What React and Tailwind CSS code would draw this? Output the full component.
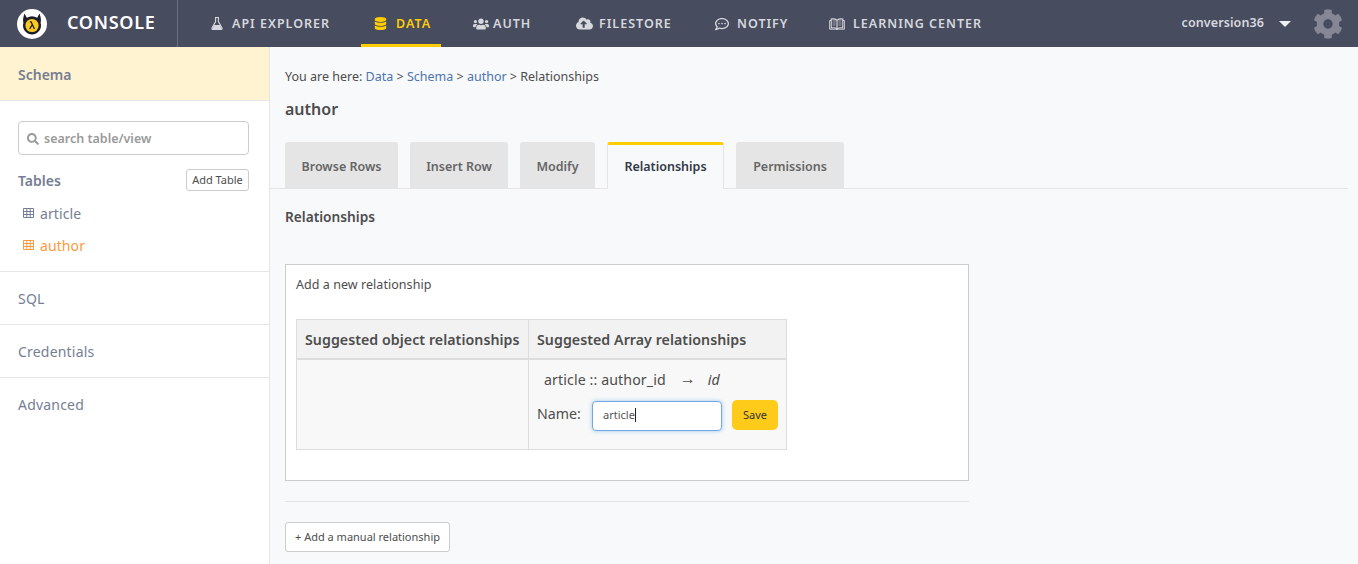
import React from "react";
import { FaDatabase, FaUsers, FaCloudUploadAlt, FaRegCommentDots, FaSearch, FaCog } from "react-icons/fa";

function FlaskIcon({ className }) {
  return (
    <svg viewBox="0 0 12 13" width="12" height="13" className={className}>
      <path d="M4 0.5 H8 M4.6 0.5 V4.6 L1 11 Q0.6 12.5 2 12.5 H10 Q11.4 12.5 11 11 L7.4 4.6 V0.5" fill="none" stroke="currentColor" strokeWidth="1.1" />
      <path d="M3.2 8 H8.8 L10.6 11.4 Q10.8 12.3 10 12.3 H2 Q1.2 12.3 1.4 11.4Z" fill="currentColor" />
    </svg>
  );
}

function BookIcon({ className }) {
  return (
    <svg viewBox="0 0 16 12" width="16" height="12" className={className}>
      <path d="M8 2.2 Q5.5 0.4 2.2 1 V10 Q5.5 9.4 8 10.8 Q10.5 9.4 13.8 10 V1 Q10.5 0.4 8 2.2Z M8 2.2 V10.8" fill="none" stroke="currentColor" strokeWidth="1.1" />
      <path d="M2.2 2.5 H0.6 V11.2 H6.6 L8 11.8 L9.4 11.2 H15.4 V2.5 H13.8" fill="none" stroke="currentColor" strokeWidth="0.9" />
      <path d="M3.6 3 H6.6 M3.6 5 H6.6 M3.6 7 H6.6 M9.4 3 H12.4 M9.4 5 H12.4 M9.4 7 H12.4" stroke="currentColor" strokeWidth="0.6" />
    </svg>
  );
}

function GridIcon({ className }) {
  return (
    <svg viewBox="0 0 11 10" width="11" height="10" className={className}>
      <path d="M0.5 0.5 H10.5 V9.5 H0.5Z M0.5 3.5 H10.5 M0.5 6.5 H10.5 M3.8 0.5 V9.5 M7.2 0.5 V9.5" fill="none" stroke="currentColor" strokeWidth="1" />
    </svg>
  );
}

const navItems = [
  { label: "API EXPLORER", icon: <FlaskIcon />, w: "w-[151px]", slot: "w-[22px] pl-px" },
  { label: "DATA", icon: <FaDatabase className="text-[13px]" />, active: true, w: "w-[80px] pl-[13px]", slot: "w-[22px]" },
  { label: "AUTH", icon: <FaUsers className="text-[16px]" />, w: "w-[103px] ml-[32px]", slot: "w-[20px]" },
  { label: "FILESTORE", icon: <FaCloudUploadAlt className="text-[17px]" />, w: "w-[139px]", slot: "w-[23px]" },
  { label: "NOTIFY", icon: <FaRegCommentDots className="text-[14px]" />, w: "w-[114px]", slot: "w-[22px]" },
  { label: "LEARNING CENTER", icon: <BookIcon />, w: "w-[160px]", slot: "w-[24px]" },
];

const tabs = [
  { label: "Browse Rows", w: "w-[113px]" },
  { label: "Insert Row", w: "w-[98px]" },
  { label: "Modify", w: "w-[75px]" },
  { label: "Relationships", w: "w-[117px]", active: true },
  { label: "Permissions", w: "w-[108px]" },
];

function Logo() {
  return (
    <svg width="30" height="30" viewBox="0 0 30 30" className="shrink-0">
      <circle cx="15" cy="15" r="15" fill="#fff" />
      <path d="M7.5 4.5 L9.8 8.8 A10 10 0 0 1 20.2 8.8 L22.5 4.5 Q24.6 10 23.6 13.8 A9 9 0 1 1 6.4 13.8 Q5.4 10 7.5 4.5Z" fill="#1b1d28" />
      <circle cx="15" cy="16.5" r="6.6" fill="#fcc91f" />
      <path d="M12.8 12.8 H14.1 L17.4 20 M15.2 15.8 L12.6 20" stroke="#1b1d28" strokeWidth="1.3" fill="none" />
    </svg>
  );
}

export default function App() {
  return (
    <div className="w-[1358px] h-[564px] overflow-hidden bg-[#f8f9fb] text-[#4d4d4d] font-['Noto_Sans','Open_Sans',sans-serif] flex flex-col">
      <header className="h-[47px] shrink-0 bg-[#484c5f] flex items-center text-[#d6d8de]">
        <div className="w-[178px] h-full flex items-center border-r border-[#6d7082] pl-[17px] gap-[20px]">
          <Logo />
          <span className="text-[18px] font-semibold tracking-[0.7px] text-white -mt-[3px]">CONSOLE</span>
        </div>
        <nav className="h-full flex pl-[32px]">
          {navItems.map(({ label, icon, active, w, slot }) => (
            <div
              key={label}
              className={`${w} h-full flex items-center text-[12.5px] font-semibold tracking-[1px] whitespace-nowrap border-y-[3px] border-t-transparent ${
                active ? "text-[#fecd05] border-b-[#ffcd00]" : "border-b-transparent"
              }`}
            >
              <span className={`${slot} shrink-0 flex items-center`}>{icon}</span>
              <span className="mt-[2px]">{label}</span>
            </div>
          ))}
        </nav>
        <div className="ml-auto flex items-center pr-[15px]">
          <span className="text-[12.5px] font-semibold tracking-[0.1px] -mt-px">conversion36</span>
          <span className="ml-[15px] w-0 h-0 border-x-[6px] border-x-transparent border-t-[6px] border-t-[#eef0f3]" />
          <FaCog className="ml-[22px] text-[30px] text-[#858797]" />
        </div>
      </header>

      <div className="flex flex-1 min-h-0">
        <aside className="w-[270px] shrink-0 bg-white border-r border-[#e5e5e5] flex flex-col">
          <div className="h-[54px] shrink-0 bg-[#fff3d1] border-b border-[#e7e7e7] pl-[18px] pt-[2px] flex items-center text-[14px] font-semibold text-[#767e93]">
            Schema
          </div>
          <div className="h-[171px] shrink-0 pl-[18px] pr-[20px] pt-[20px] border-b border-[#e5e5e5]">
            <div className="h-[34px] border border-[#cccccc] rounded-[4px] flex items-center pl-[8px] pt-[2px] gap-[5px] text-[#9a9a9a] text-[12.5px] font-semibold">
              <FaSearch className="text-[12px]" />
              <span>search table/view</span>
            </div>
            <div className="mt-[14px] flex items-center justify-between">
              <span className="text-[14px] font-semibold text-[#767e93]">Tables</span>
              <button className="h-[22px] w-[63px] border border-[#cccccc] rounded-[3px] text-[11px] text-[#4d4d4d]">Add Table</button>
            </div>
            <div className="mt-[11px] pl-[5px] flex items-center gap-[6px] text-[14px] tracking-[0.1px] text-[#767e93] h-[22px]">
              <GridIcon />
              <span>article</span>
            </div>
            <div className="mt-[10px] pl-[5px] flex items-center gap-[6px] text-[14px] tracking-[0.1px] text-[#fd9a3d] h-[22px]">
              <GridIcon />
              <span>author</span>
            </div>
          </div>
          {["SQL", "Credentials", "Advanced"].map((t) => (
            <div key={t} className="h-[53px] shrink-0 border-b border-[#e5e5e5] pl-[18px] flex items-center text-[14px] tracking-[0.2px] text-[#767e93] last:border-b-0">
              {t}
            </div>
          ))}
        </aside>

        <main className="flex-1 min-w-0 pl-[15px] pr-[10px]">
          <div className="mt-[21px] text-[12.5px] h-[17px] leading-[17px]">
            You are here: <span className="text-[#4e74ad]">Data</span> &gt; <span className="text-[#4e74ad]">Schema</span> &gt;{" "}
            <span className="text-[#4e74ad]">author</span> &gt; Relationships
          </div>
          <h2 className="mt-[13px] text-[16px] font-semibold leading-[22px]">author</h2>
          <div className="mt-[22px] h-[47px] flex gap-[12px] -ml-[15px] pl-[15px] border-b border-[#e5e5e5]">
            {tabs.map((t) => (
              <div
                key={t.label}
                className={`${t.w} rounded-t-[3px] flex items-center justify-center text-[12.5px] font-semibold ${
                  t.active
                    ? "bg-[#f8f9fb] border-t-[3px] border-x border-t-[#ffcd00] border-x-[#e5e5e5] text-[#333846] h-[47px]"
                    : "bg-[#e5e5e5] text-[#666666] h-[46px] pt-[4px]"
                }`}
              >
                {t.label}
              </div>
            ))}
          </div>
          <h3 className="mt-[18px] text-[13.7px] font-semibold leading-[20px]">Relationships</h3>

          <section className="mt-[37px] w-[684px] h-[217px] border border-[#cccccc] bg-white pl-[10px] pt-[11px]">
            <p className="text-[12.5px] tracking-[0.05px] leading-[18px]">Add a new relationship</p>
            <div className="mt-[25px] w-[491px] border border-[#dddddd] bg-[#f8f8f8] text-[14.2px]">
              <div className="flex h-[40px] bg-[#f2f2f2] border-b-2 border-[#dddddd] font-semibold tracking-[0.05px]">
                <div className="w-[232px] border-r border-[#dddddd] pl-[8px] pt-[2px] flex items-center whitespace-nowrap">Suggested object relationships</div>
                <div className="flex-1 pl-[8px] pt-[2px] flex items-center whitespace-nowrap">Suggested Array relationships</div>
              </div>
              <div className="flex h-[89px]">
                <div className="w-[232px] border-r border-[#dddddd]" />
                <div className="flex-1 pl-[8px]">
                  <div className="mt-[10px] pl-[7px] h-[20px] leading-[20px] whitespace-pre flex">
                    <span className="tracking-[0.1px]">article :: author_id</span>
                    <span className="ml-[14px] text-[16px] -mt-[2px]">→</span>
                    <i className="ml-[12px]">id</i>
                  </div>
                  <div className="mt-[10px] flex items-center">
                    <span className="w-[55px] mb-[4px]">Name:</span>
                    <div className="w-[130px] h-[30px] bg-white border border-[#76a5e6] rounded-[4px] pl-[10px] pb-[2px] flex items-center text-[11px] text-[#555555] shadow-[0_0_4px_rgba(102,175,233,0.6)]">
                      article<span className="inline-block w-px h-[14px] bg-[#222222]" />
                    </div>
                    <button className="ml-[10px] mb-[2px] w-[46px] h-[30px] bg-[#fecb1b] rounded-[5px] text-[11px] text-[#333333]">Save</button>
                  </div>
                </div>
              </div>
            </div>
          </section>

          <div className="mt-[20px] w-[684px] border-t border-[#e5e5e5]" />
          <button className="mt-[20px] w-[165px] h-[30px] bg-white border border-[#cccccc] rounded-[3px] text-[11px] text-[#4d4d4d]">+ Add a manual relationship</button>
        </main>
      </div>
    </div>
  );
}
